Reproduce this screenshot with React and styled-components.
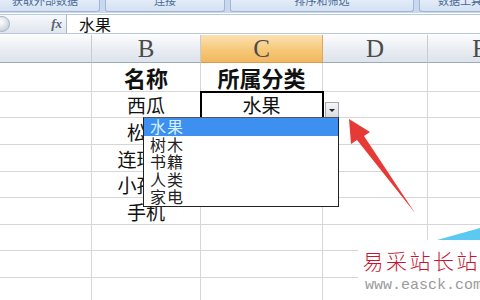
import React from 'react';
import styled, { createGlobalStyle } from 'styled-components';

const GlobalStyle = createGlobalStyle`
  html, body { margin: 0; padding: 0; background: #fff; }
  body { width: 480px; height: 300px; overflow: hidden; }
`;

const cjk = `"Noto Sans CJK SC", "Noto Sans", sans-serif`;

const Page = styled.div`
  position: relative;
  width: 480px;
  height: 300px;
  overflow: hidden;
  background: #fff;
  font-family: ${cjk};
`;

const Ribbon = styled.div`
  display: flex;
  gap: 5px;
  height: 13px;
  background: #c9d8ec;
  overflow: hidden;
`;

const RibbonButton = styled.div`
  flex: 0 0 ${p => p.w}px;
  height: 11px;
  margin-left: ${p => p.ml || 0}px;
  border: 1px solid #9fb6d6;
  border-top: none;
  border-radius: 0 0 3px 3px;
  background: linear-gradient(#e3ecf8, #d3e1f2);
  color: #4a6a98;
  font-size: 11px;
  line-height: 1px;
  text-align: center;
  overflow: hidden;
  white-space: nowrap;
`;

const FormulaBar = styled.div`
  display: flex;
  height: 18px;
  margin-top: 1px;
  border-top: 1px solid #b9c9dd;
  border-bottom: 1px solid #b9c9dd;
`;

const NameArea = styled.div`
  display: flex;
  align-items: center;
  justify-content: space-between;
  width: 67px;
  border-right: 1px solid #a9b8cc;
  background: linear-gradient(#f7f9fc, #dfe6ef);
  padding-right: 4px;
  box-sizing: border-box;
`;

const Knob = styled.div`
  width: 14px;
  height: 14px;
  margin-left: -6px;
  border-radius: 50%;
  background: radial-gradient(circle at 40% 35%, #ffffff, #b8c3d2);
  border: 1px solid #a9b5c6;
`;

const Fx = styled.span`
  font-family: "Liberation Serif", serif;
  font-style: italic;
  font-weight: bold;
  font-size: 13px;
  color: #55606e;
`;

const FormulaText = styled.div`
  padding-left: 12px;
  font-size: 16px;
  line-height: 18px;
  color: #111;
`;

const Sheet = styled.div`
  display: grid;
  grid-template-columns: 92px 109px 122px 105px 105px;
  grid-template-rows: 28px 29px 26px 27px 27px 26px 27px 26px 27px 27px;
  margin-top: 1px;
`;

const ColHead = styled.div`
  display: flex;
  align-items: center;
  justify-content: center;
  border-right: 1px solid ${p => (p.active ? '#e2a55a' : '#c5ccd6')};
  border-bottom: 1px solid ${p => (p.active ? '#d89a4c' : '#9eabbd')};
  background: ${p =>
    p.active
      ? 'linear-gradient(#fbe2b4, #f6c879 55%, #f2b75f)'
      : 'linear-gradient(#fbfcfd, #e9edf3 55%, #dde3eb)'};
  font-family: "Liberation Serif", serif;
  font-size: 25px;
  color: #4b4b4b;
`;

const Cell = styled.div`
  display: flex;
  align-items: center;
  justify-content: center;
  border-right: 1px solid #d6d6d6;
  border-bottom: 1px solid #d6d6d6;
  font-size: ${p => (p.head ? 22 : 19)}px;
  font-weight: ${p => (p.head ? 700 : 400)};
  color: #111;
  white-space: nowrap;
  overflow: hidden;
  position: relative;
  ${p => p.active && `
    outline: 2px solid #000;
    outline-offset: -1px;
    z-index: 1;
  `}
`;

const DropButton = styled.div`
  position: absolute;
  left: 325px;
  top: 102px;
  width: 12px;
  height: 14px;
  border: 1px solid #a3a9b2;
  background: linear-gradient(#f4f5f7, #d9dde3);
  display: flex;
  align-items: center;
  justify-content: center;
  z-index: 3;
`;

const TriangleDown = styled.div`
  width: 0;
  height: 0;
  border-left: 3px solid transparent;
  border-right: 3px solid transparent;
  border-top: 3px solid #222;
`;

const DropList = styled.div`
  position: absolute;
  left: 143px;
  top: 117px;
  width: 194px;
  height: 88px;
  border: 1px solid #222;
  border-top-color: #555;
  background: #fff;
  display: flex;
  flex-direction: column;
  z-index: 3;
`;

const DropItem = styled.div`
  height: 17.6px;
  padding-left: 6px;
  font-size: 16px;
  line-height: 17.6px;
  letter-spacing: 1px;
  color: ${p => (p.selected ? '#d8efff' : '#222')};
  background: ${p => (p.selected ? '#3d8ff0' : 'transparent')};
`;

const ArrowSvg = styled.svg`
  position: absolute;
  left: 0;
  top: 0;
  z-index: 4;
  pointer-events: none;
`;

const Watermark = styled.div`
  position: absolute;
  left: 358px;
  top: 240px;
  width: 122px;
  height: 60px;
  background: #fff;
  display: flex;
  flex-direction: column;
  align-items: flex-end;
  z-index: 5;
`;

const MarkTitle = styled.div`
  margin-top: 8px;
  font-size: 21px;
  line-height: 24px;
  letter-spacing: 2.5px;
  color: #c8142f;
  font-weight: 300;
`;

const MarkUrl = styled.div`
  margin-top: 5px;
  font-family: "Liberation Mono", monospace;
  font-size: 15px;
  line-height: 17px;
  color: #9b9b9b;
  margin-right: -2px;
`;

const rows = [
  ['', '名称', '所属分类', '', ''],
  ['', '西瓜', '水果', '', ''],
  ['', '松树', '', '', ''],
  ['', '连环画', '', '', ''],
  ['', '小孩子', '', '', ''],
  ['', '手机', '', '', ''],
  ['', '', '', '', ''],
  ['', '', '', '', ''],
  ['', '', '', '', ''],
];

const options = ['水果', '树木', '书籍', '人类', '家电'];

function App() {
  return (
    <Page>
      <GlobalStyle />
      <Ribbon>
        <RibbonButton w={108} ml={-10}>获取外部数据</RibbonButton>
        <RibbonButton w={118}>连接</RibbonButton>
        <RibbonButton w={182}>排序和筛选</RibbonButton>
        <RibbonButton w={80}>数据工具</RibbonButton>
      </Ribbon>
      <FormulaBar>
        <NameArea>
          <Knob />
          <Fx>fx</Fx>
        </NameArea>
        <FormulaText>水果</FormulaText>
      </FormulaBar>
      <Sheet>
        <ColHead></ColHead>
        <ColHead>B</ColHead>
        <ColHead active>C</ColHead>
        <ColHead>D</ColHead>
        <ColHead>E</ColHead>
        {rows.map((row, r) =>
          row.map((text, c) => (
            <Cell key={r + '-' + c} head={r === 0} active={r === 1 && c === 2}>
              {text}
            </Cell>
          ))
        )}
      </Sheet>
      <DropButton>
        <TriangleDown />
      </DropButton>
      <DropList>
        {options.map((o, i) => (
          <DropItem key={o} selected={i === 0}>{o}</DropItem>
        ))}
      </DropList>
      <ArrowSvg width="480" height="300" viewBox="0 0 480 300">
        <polygon
          points="349,119 370,132 364,136 415,213 357,140 351,144"
          fill="#e63a36"
        />
        <polygon points="437,240 480,228 480,240" fill="#5cc9f2" />
      </ArrowSvg>
      <Watermark>
        <MarkTitle>易采站长站</MarkTitle>
        <MarkUrl>www.easck.com</MarkUrl>
      </Watermark>
    </Page>
  );
}

export default App;
